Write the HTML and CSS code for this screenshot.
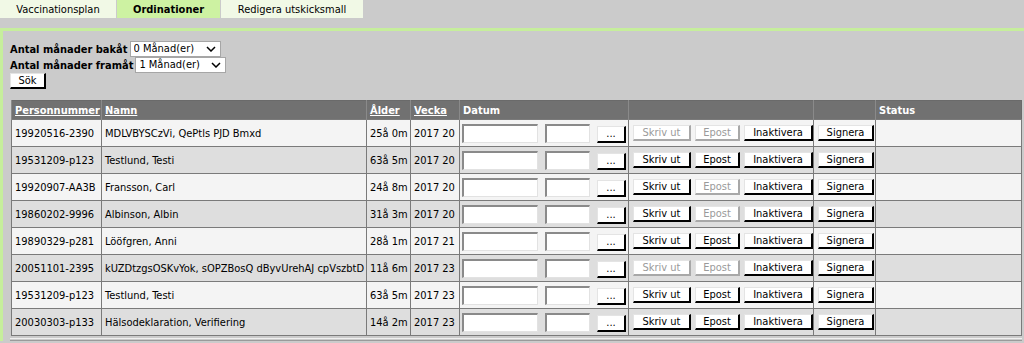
FILE: index.html
```html
<!DOCTYPE html>
<html lang="sv">
<head>
    <meta charset="UTF-8">
    <title>Ordinationer</title>
    <link rel="stylesheet" href="styles.css">
</head>
<body>
    <div class="tabs">
        <a class="tab t-plan">Vaccinationsplan</a>
        <a class="tab t-ord active">Ordinationer</a>
        <a class="tab t-mall">Redigera utskicksmall</a>
    </div>

    <div class="panel">
        <form class="filter">
            <div class="filter-row">
                <label>Antal månader bakåt</label>
                <span class="select-wrap back">
                    <select><option>0 Månad(er)</option></select>
                    <svg class="chev" width="10" height="6" viewBox="0 0 10 6"><path d="M1 1l4 4 4-4" fill="none" stroke="#000" stroke-width="1.5"/></svg>
                </span>
            </div>
            <div class="filter-row">
                <label>Antal månader framåt</label>
                <span class="select-wrap">
                    <select><option>1 Månad(er)</option></select>
                    <svg class="chev" width="10" height="6" viewBox="0 0 10 6"><path d="M1 1l4 4 4-4" fill="none" stroke="#000" stroke-width="1.5"/></svg>
                </span>
            </div>
            <button type="button" class="btn">Sök</button>
        </form>

        <table class="grid">
            <colgroup>
                <col style="width:90px"><col style="width:265px"><col style="width:44px"><col style="width:49px">
                <col style="width:169px"><col style="width:185px"><col style="width:62px"><col>
            </colgroup>
            <thead>
                <tr>
                    <th><a>Personnummer</a></th>
                    <th><a>Namn</a></th>
                    <th><a>Ålder</a></th>
                    <th><a>Vecka</a></th>
                    <th>Datum</th>
                    <th></th>
                    <th></th>
                    <th>Status</th>
                </tr>
            </thead>
            <tbody id="rows"></tbody>
        </table>
        <div class="panel-foot"></div>
    </div>

    <script>
        // Ordinationer att visa
        const rows = [
            ['19920516-2390', 'MDLVBYSCzVi, QePtls PJD Bmxd', '25å 0m', '2017 20', true, true],
            ['19531209-p123', 'Testlund, Testi', '63å 5m', '2017 20', false, false],
            ['19920907-AA3B', 'Fransson, Carl', '24å 8m', '2017 20', false, true],
            ['19860202-9996', 'Albinson, Albin', '31å 3m', '2017 20', false, true],
            ['19890329-p281', 'Lööfgren, Anni', '28å 1m', '2017 21', false, false],
            ['20051101-2395', 'kUZDtzgsOSKvYok, sOPZBosQ dByvUrehAJ cpVszbtD', '11å 6m', '2017 23', true, true],
            ['19531209-p123', 'Testlund, Testi', '63å 5m', '2017 23', false, false],
            ['20030303-p133', 'Hälsodeklaration, Verifiering', '14å 2m', '2017 23', false, false]
        ];

        const tbody = document.getElementById('rows');
        rows.forEach(function(r, i) {
            const tr = document.createElement('tr');
            tr.className = i % 2 ? 'even' : 'odd';
            tr.innerHTML =
                '<td>' + r[0] + '</td>' +
                '<td>' + r[1] + '</td>' +
                '<td>' + r[2] + '</td>' +
                '<td>' + r[3] + '</td>' +
                '<td class="dates"><input type="text" class="date"><input type="text" class="time"><button type="button" class="btn dots">...</button></td>' +
                '<td class="actions">' +
                    '<button type="button" class="btn w-print"' + (r[4] ? ' disabled' : '') + '>Skriv ut</button>' +
                    '<button type="button" class="btn w-mail"' + (r[5] ? ' disabled' : '') + '>Epost</button>' +
                    '<button type="button" class="btn w-inact">Inaktivera</button>' +
                '</td>' +
                '<td class="actions"><button type="button" class="btn w-sign">Signera</button></td>' +
                '<td></td>';
            tbody.appendChild(tr);
        });
    </script>
</body>
</html>
```

FILE: styles.css
```css
body {
    margin: 0;
    font-family: 'DejaVu Sans Condensed', 'DejaVu Sans', sans-serif;
    font-stretch: condensed;
    font-size: 11px;
    color: #000;
    background-color: #cbcbcb;
}
.tabs {
    display: flex;
    height: 18px;
    margin-bottom: 10px;
}
.tab {
    display: block;
    box-sizing: border-box;
    padding-top: 3px;
    text-align: center;
    background-color: #f1f9e6;
    margin-right: 1px;
}
.t-plan { width: 116px; }
.t-ord { width: 103px; }
.t-mall { width: 142px; }
.tab.active {
    background-color: #cdf2a2;
    font-weight: bold;
}
.panel {
    border-top: 3px solid #c6ee9c;
    border-left: 3px solid #c6ee9c;
    padding: 10px 2px 0 7px;
}
.filter-row {
    display: flex;
    align-items: center;
    height: 16px;
}
.filter-row label {
    font-weight: bold;
    margin-right: 2px;
}
.select-wrap {
    position: relative;
    display: inline-block;
}
.select-wrap select {
    appearance: none;
    -webkit-appearance: none;
    width: 91px;
    height: 16px;
    padding: 0 0 0 3px;
    border: 1px solid #a6a6a6;
    border-radius: 0;
    background: #fff;
    font: inherit;
    font-size: 11px;
    line-height: 14px;
}
.select-wrap .chev {
    position: absolute;
    right: 5px;
    top: 5px;
    pointer-events: none;
}
.btn {
    font: inherit;
    font-size: 11px;
    background: #fff;
    color: #000;
    border-style: solid;
    border-width: 1px 2px 2px 1px;
    border-color: #e4e4e4 #000 #000 #e4e4e4;
    padding: 0 6px;
    height: 16px;
    line-height: 12px;
    border-radius: 0;
    cursor: pointer;
}
.btn:disabled {
    color: #9a9a9a;
    border-color: #e4e4e4 #a8a8a8 #a8a8a8 #e4e4e4;
    cursor: default;
}
.filter .btn {
    width: 36px;
    padding: 0;
}
.grid {
    border-collapse: collapse;
    table-layout: fixed;
    width: 1011px;
    margin: 11px 0 0 1px;
    border: 1px solid #6a6a6a;
}
.grid th {
    background-color: #717171;
    color: #fff;
    text-align: left;
    font-weight: bold;
    height: 18px;
    padding: 0 3px;
    border-left: 1px solid #8a8a8a;
}
.grid th a {
    color: #fff;
    text-decoration: underline;
}
.grid td {
    height: 26px;
    padding: 0 3px;
    border: 1px solid #7a7a7a;
    white-space: nowrap;
}
.grid tr.odd td {
    background-color: #f4f4f4;
}
.grid tr.even td {
    background-color: #dedede;
}
.grid td.dates,
.grid td.actions {
    padding: 0 2px;
    font-size: 0;
}
input.date,
input.time {
    box-sizing: border-box;
    height: 19px;
    border-style: solid;
    border-width: 2px 1px 1px 2px;
    border-color: #8a8a8a #e2e2e2 #e2e2e2 #8a8a8a;
    background: #fff;
    padding: 0;
    vertical-align: middle;
}
input.date {
    width: 76px;
    margin-right: 7px;
}
input.time {
    width: 45px;
    margin-right: 7px;
}
.btn.dots {
    width: 29px;
    height: 17px;
    padding: 0;
    vertical-align: middle;
    margin-top: 2px;
}
.actions .btn {
    vertical-align: middle;
    padding: 0;
    margin-right: 4px;
}
.w-print { width: 58px; margin-left: 2px; }
.w-mail { width: 45px; }
.w-inact { width: 69px; }
.w-sign { width: 56px; margin-left: 2px; }
.panel-foot {
    margin-top: 2px;
    border-top: 1px solid #f0f0f0;
    border-bottom: 1px solid #9a9a9a;
    height: 1px;
}
```
